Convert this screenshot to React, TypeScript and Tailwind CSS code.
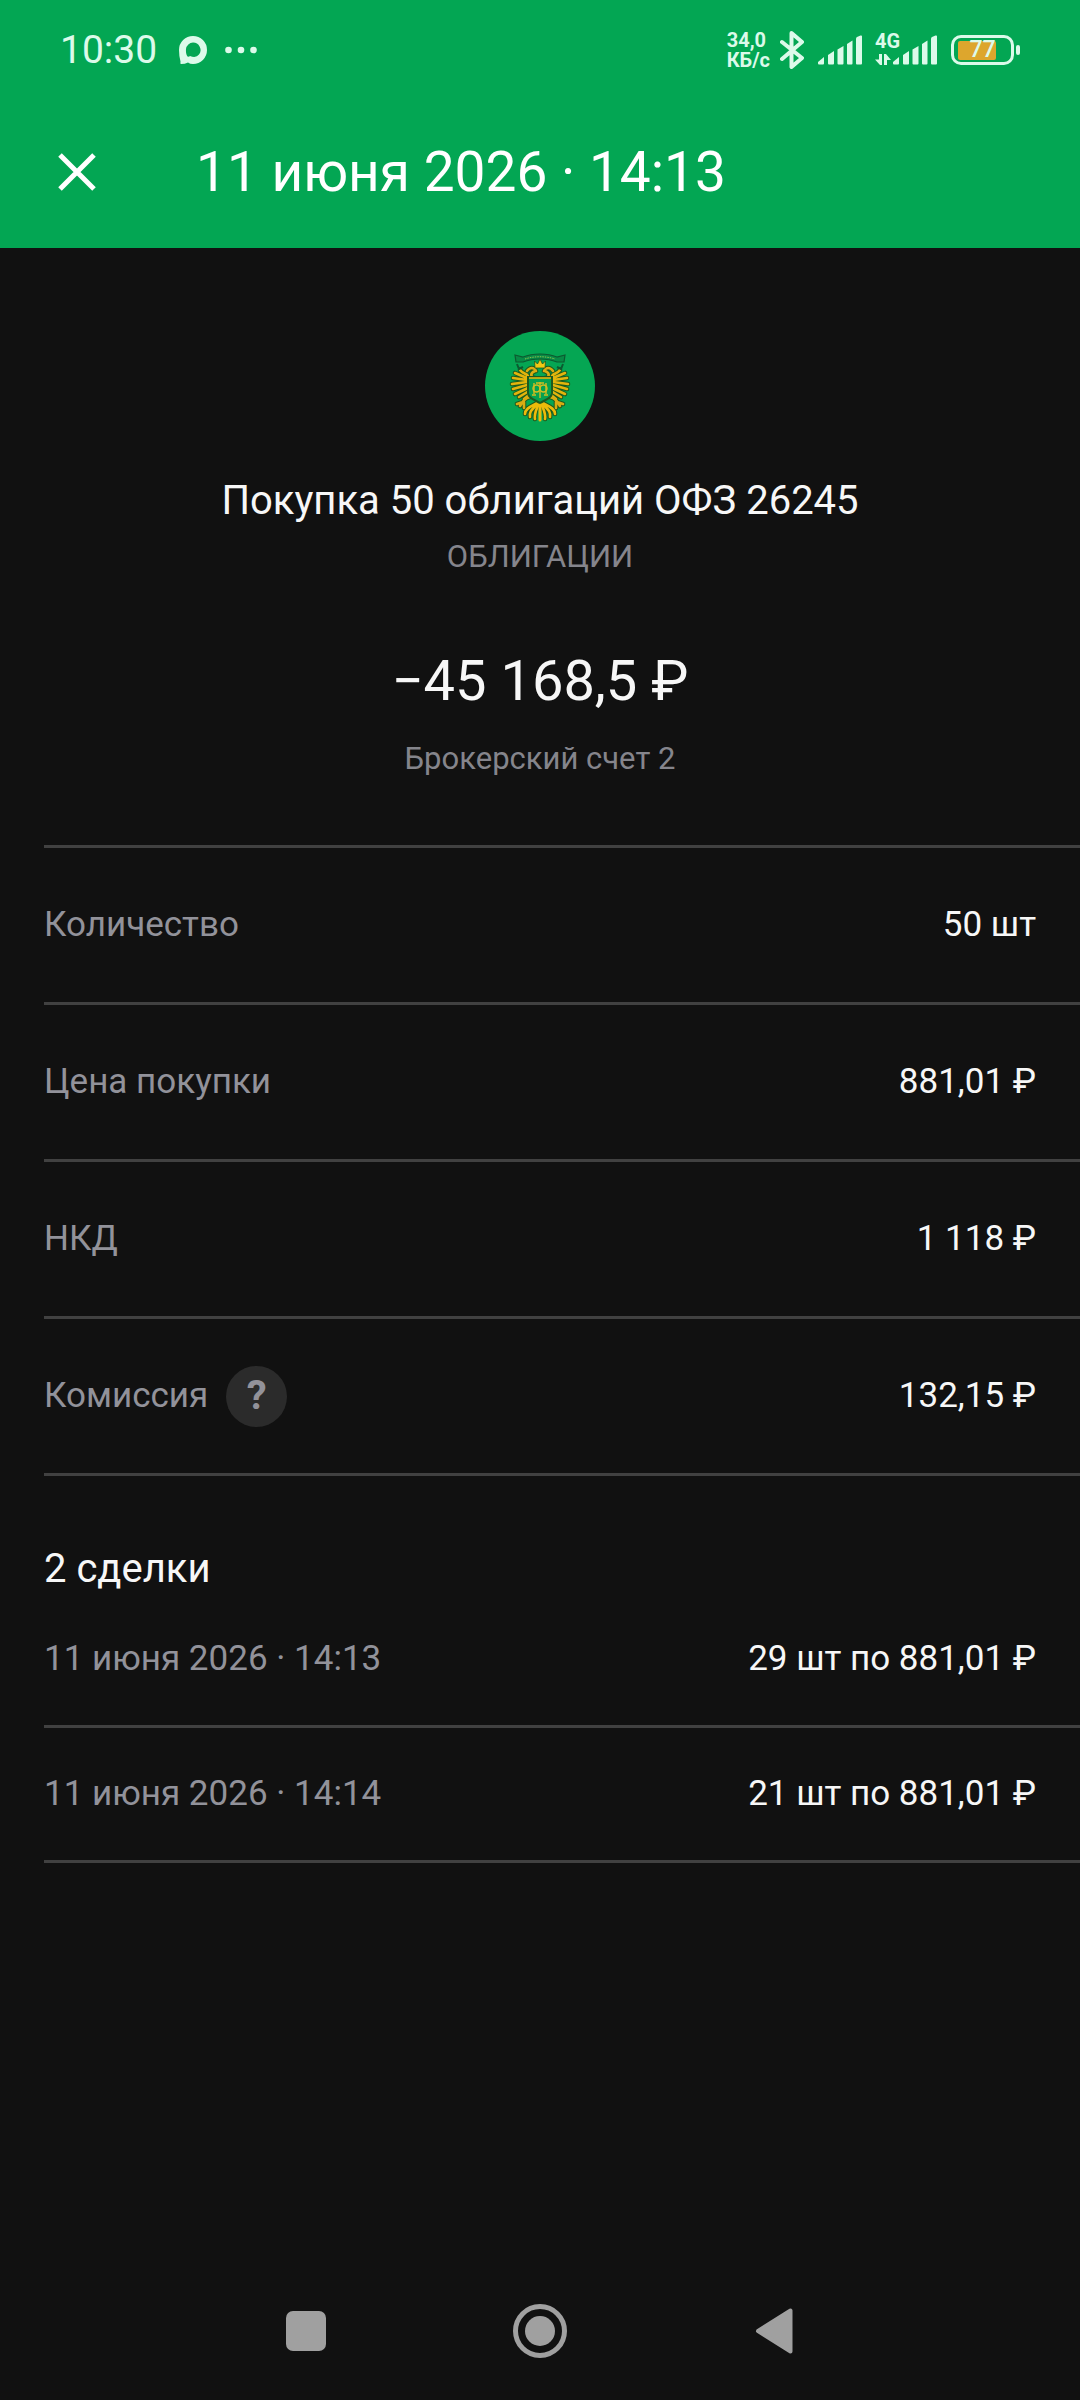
import type { ReactNode } from 'react';

const details = [
  { label: 'Количество', value: '50 шт' },
  { label: 'Цена покупки', value: '881,01 ₽' },
  { label: 'НКД', value: '1 118 ₽' },
  { label: 'Комиссия', value: '132,15 ₽', hint: true },
];

const deals = [
  { date: '11 июня 2026 · 14:13', value: '29 шт по 881,01 ₽' },
  { date: '11 июня 2026 · 14:14', value: '21 шт по 881,01 ₽' },
];

// left half of the eagle, the right one is mirrored
const wing =
  'M43 45C41 42 38 43 35 39M42 47L30 42M42 49L28 47M42 51L27 53M42 54L28 58M43 57L30 63M44 60L34 66M44 64L39 68';
const body =
  'M50 47C45 46 45 42 50 40M51 40C49 36 45 36 42 40M45 66C40 67 38 70 35 75M38 71L32 73M39 71L39 77';
const tail = 'M52 72C47 75 40 77 40 83M53 72C48 78 44 80 45 86M54 72C51 80 49 82 50 88';

function EagleHalf() {
  return (
    <g fill="none" strokeLinecap="round" strokeLinejoin="round">
      <path d={wing + body + tail} stroke="#1d5a1e" strokeWidth="4.6" />
      <path d={wing} stroke="#e3b40c" strokeWidth="2.6" />
      <path d={body} stroke="#d9ac12" strokeWidth="2.6" />
      <path d={tail} stroke="#ecbb0a" strokeWidth="2.6" />
    </g>
  );
}

function BondLogo() {
  return (
    <svg viewBox="0 0 110 110" className="size-[110px]" aria-hidden="true">
      <circle cx="55" cy="55" r="55" fill="#05a653" />
      <EagleHalf />
      <g transform="translate(110 0) scale(-1 1)">
        <EagleHalf />
      </g>
      <path d="M55 72V89" stroke="#ecbb0a" strokeWidth="3" strokeLinecap="round" />
      <path
        d="M30 24L38 26C48 22 62 22 72 26L80 24L79 31L72 31C62 27 48 27 38 31L31 31Z"
        fill="#088a45"
        stroke="#0c5a30"
        strokeWidth="1.2"
      />
      <path d="M40 28C49 25 61 25 70 28" fill="none" stroke="#8fc04a" strokeDasharray="1.5 1" />
      <path d="M32 33L34 38L38 36M78 33L76 38L72 36" fill="none" stroke="#0c5a30" strokeWidth="2" />
      <path
        d="M50 37L49.5 30L52.5 33L55 28L57.5 33L60.5 30L60 37Z"
        fill="#f0c814"
        stroke="#1d5a1e"
        strokeWidth="0.8"
      />
      <path d="M43 46H67V62C67 67 60 69 55 72C50 69 43 67 43 62Z" fill="#05a14f" stroke="#1d5a1e" strokeWidth="2" />
      <path d="M44 47H66" stroke="#e3b40c" strokeWidth="1.6" />
      <g fill="none" stroke="#d2bd22" strokeWidth="1.4">
        <path d="M49 52V63M61 52V63M55 51V67M51 52H59M47 64H51M59 64H63" />
        <circle cx="51.5" cy="57.5" r="3.5" />
        <circle cx="58.5" cy="57.5" r="3.5" />
      </g>
    </svg>
  );
}

function SignalBars() {
  return (
    <svg viewBox="0 0 44 30" className="h-[30px] w-11" fill="currentColor" aria-hidden="true">
      <path d="M0 28.5V27L6 22V28.5Q6 29.5 5 29.5H1Q0 29.5 0 28.5Z" />
      <path d="M10 20L16 16V28.5Q16 29.5 15 29.5H11Q10 29.5 10 28.5Z" />
      <path d="M19.5 14.5L25.5 11V28.5Q25.5 29.5 24.5 29.5H20.5Q19.5 29.5 19.5 28.5Z" />
      <path d="M29 9L34.5 5.5V28.5Q34.5 29.5 33.5 29.5H30Q29 29.5 29 28.5Z" />
      <path d="M38 4Q38 2.5 39 2L42.5 .5Q44 0 44 1.5V28.5Q44 29.5 43 29.5H39Q38 29.5 38 28.5Z" />
    </svg>
  );
}

function StatusBar() {
  return (
    <div className="flex h-24 items-center justify-between px-[60px] pt-1 text-[#dcfaea]">
      <div className="flex items-center">
        <span className="text-[39px] leading-12">10:30</span>
        <svg viewBox="0 0 28 28" className="ml-[22px] size-7" aria-hidden="true">
          <path
            d="M14 0A14 14 0 0 1 14 28Q11 28 9 26.5Q6 28 2 28Q1 28 1.5 25.5Q0 20 0 14A14 14 0 0 1 14 0ZM14 6.5A7.5 7.5 0 0 0 7 13Q6.5 18 8.5 20.5Q10 21 11 20Q17 22.5 20 18.5A7.5 7.5 0 0 0 14 6.5Z"
            fill="currentColor"
            fillRule="evenodd"
          />
        </svg>
        <svg viewBox="0 0 32 8" className="ml-[18px] h-2 w-8" fill="currentColor" aria-hidden="true">
          <circle cx="3.5" cy="4" r="3.3" />
          <circle cx="16" cy="4" r="3.3" />
          <circle cx="28.5" cy="4" r="3.3" />
        </svg>
      </div>

      <div className="flex items-center">
        <div className="text-[20px] leading-5 font-bold">
          <div>34,0</div>
          <div>КБ/с</div>
        </div>
        <svg
          viewBox="0 0 24 38"
          className="ml-[10px] h-[38px] w-6"
          fill="none"
          stroke="currentColor"
          strokeWidth="4"
          strokeLinecap="round"
          strokeLinejoin="round"
          aria-hidden="true"
        >
          <path d="M2 11L22 27L11.5 36V2L22 11L2 28" />
        </svg>
        <div className="ml-[14px]">
          <SignalBars />
        </div>
        <div className="relative ml-[13px] flex items-end">
          <span className="absolute -top-1 left-0 text-[20px] leading-5 font-bold">4G</span>
          <svg viewBox="0 0 16 12" className="mr-0.5 h-3 w-4" fill="currentColor" aria-hidden="true">
            <path d="M4 1H7V12H5L0 6.5H4ZM9 1H11L16 7H12V12H9Z" />
          </svg>
          <SignalBars />
        </div>
        <div className="ml-[14px] flex items-center gap-[2px]">
          <div className="relative flex h-[30px] w-[63px] items-center justify-center rounded-[10px] border-3 border-current">
            <div className="absolute top-[3px] left-1 h-[19px] w-[38px] rounded-[2px] bg-[#dda62d]" />
            <span className="relative text-[23px] leading-6 font-medium">77</span>
          </div>
          <div className="h-[10px] w-1 rounded-[2px] bg-current" />
        </div>
      </div>
    </div>
  );
}

function Row({ label, children, className }: { label: ReactNode; children: ReactNode; className: string }) {
  return (
    <div className={`flex items-center justify-between border-[#414141] pr-11 text-[35px] leading-11 ${className}`}>
      <dt className="flex items-center gap-[18px] text-[#92929a]">{label}</dt>
      <dd>{children}</dd>
    </div>
  );
}

export default function App() {
  return (
    <div className="flex min-h-screen flex-col bg-[#111111] font-['Roboto',sans-serif] text-[#f7f7f7]">
      <header className="bg-[#03a653] text-white">
        <StatusBar />
        <div className="flex h-[152px] items-center gap-[100px] pl-[58px]">
          <button type="button" aria-label="Закрыть">
            <svg viewBox="0 0 38 38" className="size-[38px]" stroke="currentColor" strokeWidth="5" aria-hidden="true">
              <path d="M2 2L36 36M36 2L2 36" />
            </svg>
          </button>
          <h1 className="text-[55px] leading-[72px]">11 июня 2026 · 14:13</h1>
        </div>
      </header>

      <main>
        <section className="flex flex-col items-center pt-[83px] pb-16 text-center">
          <BondLogo />
          <h2 className="mt-8 text-[40px] leading-14">Покупка 50 облигаций ОФЗ 26245</h2>
          <p className="mt-1.5 text-[31px] leading-11 text-[#85858c]">ОБЛИГАЦИИ</p>
          <p className="mt-[66px] text-[56px] leading-[72px]">−45 168,5 ₽</p>
          <p className="mt-5 text-[31px] leading-11 text-[#85858c]">Брокерский счет 2</p>
        </section>

        <dl className="ml-11 border-b-3 border-[#414141]">
          {details.map((item) => (
            <Row
              key={item.label}
              className="h-[157px] border-t-3"
              label={
                <>
                  {item.label}
                  {item.hint && (
                    <button
                      type="button"
                      aria-label="Подробнее о комиссии"
                      className="flex size-[61px] items-center justify-center rounded-full bg-[#2b2b2b] text-[40px] leading-11 font-bold"
                    >
                      ?
                    </button>
                  )}
                </>
              }
            >
              {item.value}
            </Row>
          ))}
        </dl>

        <section className="mt-[69px] ml-11">
          <h2 className="text-[40px] leading-12">2 сделки</h2>
          <dl>
            {deals.map((deal) => (
              <Row key={deal.date} className="h-[135px] border-b-3" label={deal.date}>
                {deal.value}
              </Row>
            ))}
          </dl>
        </section>
      </main>

      <nav className="mt-auto grid h-[138px] grid-cols-3 px-[17.5%] text-[#a0a0a0]">
        <button type="button" aria-label="Недавние" className="flex items-center justify-center">
          <span className="size-10 rounded-[7px] bg-current" />
        </button>
        <button type="button" aria-label="Домой" className="flex items-center justify-center">
          <svg viewBox="0 0 54 54" className="size-[54px]" aria-hidden="true">
            <circle cx="27" cy="27" r="24.5" fill="none" stroke="currentColor" strokeWidth="5" />
            <circle cx="27" cy="27" r="15" fill="currentColor" />
          </svg>
        </button>
        <button type="button" aria-label="Назад" className="flex items-center justify-center">
          <svg
            viewBox="0 0 38 46"
            className="h-[46px] w-[38px]"
            fill="currentColor"
            stroke="currentColor"
            strokeWidth="4"
            strokeLinejoin="round"
            aria-hidden="true"
          >
            <path d="M3 23L35.5 2.5V43.5Z" />
          </svg>
        </button>
      </nav>
    </div>
  );
}
